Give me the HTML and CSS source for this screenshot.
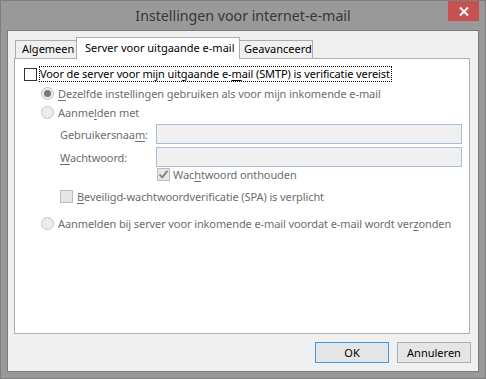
FILE: index.html
```html
<!DOCTYPE html>
<html lang="nl">
<head>
<meta charset="utf-8">
<title>Instellingen voor internet-e-mail</title>
<link rel="stylesheet" href="styles.css">
</head>
<body>
<div class="window">
  <div class="titlebar">
    <div class="spacer"></div>
    <div class="title">Instellingen voor internet-e-mail</div>
    <div class="close">
      <svg width="10" height="9" viewBox="0 0 10 9"><path d="M1 0.5 L9 8.5 M9 0.5 L1 8.5" stroke="#fff" stroke-width="2" fill="none"/></svg>
    </div>
  </div>
  <div class="client">
    <div class="tabs">
      <div class="tab t1">Algemeen</div>
      <div class="tab active">Server voor uitgaande e-mail</div>
      <div class="tab t3">Geavanceerd</div>
    </div>
    <div class="panel">
      <div class="row r1">
        <span class="cb"></span>
        <span class="focus">Voor de server voor mijn uitgaande e-<u>m</u>ail (SMTP) is verificatie vereist</span>
      </div>
      <div class="group">
        <div class="row radio-row r2">
          <span class="rb checked"></span>
          <span class="lbl"><u>D</u>ezelfde instellingen gebruiken als voor mijn inkomende e-mail</span>
        </div>
        <div class="row radio-row r3">
          <span class="rb"></span>
          <span class="lbl">Aanme<u>l</u>den met</span>
        </div>
        <div class="field f1">
          <span class="flabel">Gebruikersnaa<u>m</u>:</span>
          <span class="input"></span>
        </div>
        <div class="field f2">
          <span class="flabel"><u>W</u>achtwoord:</span>
          <span class="input"></span>
        </div>
        <div class="row remember">
          <span class="cb dis checked">
            <svg width="11" height="11" viewBox="0 0 11 11"><path d="M1.5 5.5 L4.2 8.3 L9.5 1.8" stroke="#7d7d7d" stroke-width="1.8" fill="none"/></svg>
          </span>
          <span class="lbl">Wac<u>h</u>twoord onthouden</span>
        </div>
        <div class="row spa">
          <span class="cb dis"></span>
          <span class="lbl"><u>B</u>eveiligd-wachtwoordverificatie (SPA) is verplicht</span>
        </div>
        <div class="row radio-row r4">
          <span class="rb"></span>
          <span class="lbl">Aanmelden bij server voor inkomende e-mail voordat e-mail wordt ver<u>z</u>onden</span>
        </div>
      </div>
    </div>
    <div class="buttons">
      <div class="btn default">OK</div>
      <div class="btn">Annuleren</div>
    </div>
  </div>
</div>
</body>
</html>
```

FILE: styles.css
```css
* { box-sizing: border-box; }
html, body { margin: 0; padding: 0; }
body {
  width: 486px;
  height: 379px;
  font-family: "Noto Sans", "Open Sans", sans-serif;
  font-size: 11px;
  overflow: hidden;
}
u { text-decoration: underline; text-underline-offset: 2px; text-decoration-thickness: 1px; }

.window {
  width: 486px;
  height: 379px;
  background: #999999;
  border: 1px solid #7e7e7e;
  display: flex;
  flex-direction: column;
}

.titlebar {
  height: 29px;
  display: flex;
  align-items: flex-start;
}
.spacer { width: 37px; flex: none; }
.title {
  flex: 1;
  text-align: center;
  font-size: 14.2px;
  color: #363636;
  line-height: 29px;
}
.close {
  width: 31px;
  height: 20px;
  margin-right: 6px;
  background: #c75050;
  display: flex;
  align-items: center;
  justify-content: center;
  flex: none;
}

.client {
  margin: 0 6px 6px 6px;
  border: 1px solid #7a7a7a;
  background: #f0f0f0;
  flex: 1;
  display: flex;
  flex-direction: column;
  padding: 6px 8px 0 6px;
}

.tabs {
  display: flex;
  align-items: flex-end;
  height: 21px;
  padding-left: 1px;
  position: relative;
  z-index: 1;
}
.tab {
  height: 18px;
  border: 1px solid #acacac;
  border-bottom: none;
  background: #f0f0f0;
  line-height: 16px;
  color: #000;
  white-space: nowrap;
  flex: none;
}
.t1 { width: 62px; padding-left: 6px; }
.tab.active {
  width: 164px;
  height: 22px;
  margin-bottom: -1px;
  margin-left: -1px;
  background: #fff;
  padding-left: 8px;
  line-height: 19px;
}
.t3 { width: 73px; border-left: none; padding-left: 4px; }

.panel {
  height: 276px;
  background: #fff;
  border: 1px solid #acacac;
  padding: 7px 0 0 9px;
  letter-spacing: -0.1px;
}

.row {
  display: flex;
  align-items: center;
  white-space: nowrap;
}
.r1 { height: 16px; }
.cb {
  width: 13px;
  height: 13px;
  border: 1px solid #333;
  background: #fff;
  flex: none;
  display: flex;
  align-items: center;
  justify-content: center;
}
.focus {
  margin-left: 2px;
  border: 1px dotted #000;
  padding: 0 1px 0 0;
  line-height: 14px;
  color: #000;
}

.group { padding-left: 17px; color: #6d6d6d; }
.radio-row { height: 19px; }
.r2 { margin-top: 2px; }
.rb {
  width: 13px;
  height: 13px;
  border-radius: 50%;
  border: 1px solid #c4c4c4;
  background: #ececec;
  flex: none;
  display: flex;
  align-items: center;
  justify-content: center;
}
.rb.checked::after {
  content: "";
  width: 7px;
  height: 7px;
  border-radius: 50%;
  background: #7a7a7a;
}
.lbl { margin-left: 4px; }

.field {
  display: flex;
  align-items: center;
  height: 20px;
  padding-left: 19px;
}
.f1 { margin-top: 2px; }
.f2 { margin-top: 3px; }
.flabel { width: 96px; flex: none; }
.input {
  width: 306px;
  height: 20px;
  background: #f0f0f0;
  border: 1px solid #a9bfd6;
  flex: none;
}

.cb.dis { border-color: #bcbcbc; background: #e6e6e6; }
.remember { height: 15px; padding-left: 116px; }
.remember .lbl { margin-left: 3px; }
.spa { height: 18px; margin-top: 5px; padding-left: 19px; }
.r4 { margin-top: 9px; }

.buttons {
  display: flex;
  justify-content: flex-end;
  gap: 8px;
  margin-top: 8px;
  margin-right: -1px;
}
.btn {
  width: 74px;
  height: 21px;
  border: 1px solid #adadad;
  background: #e5e5e5;
  text-align: center;
  line-height: 19px;
  color: #000;
}
.btn.default { border-color: #3c9ae6; }
```
